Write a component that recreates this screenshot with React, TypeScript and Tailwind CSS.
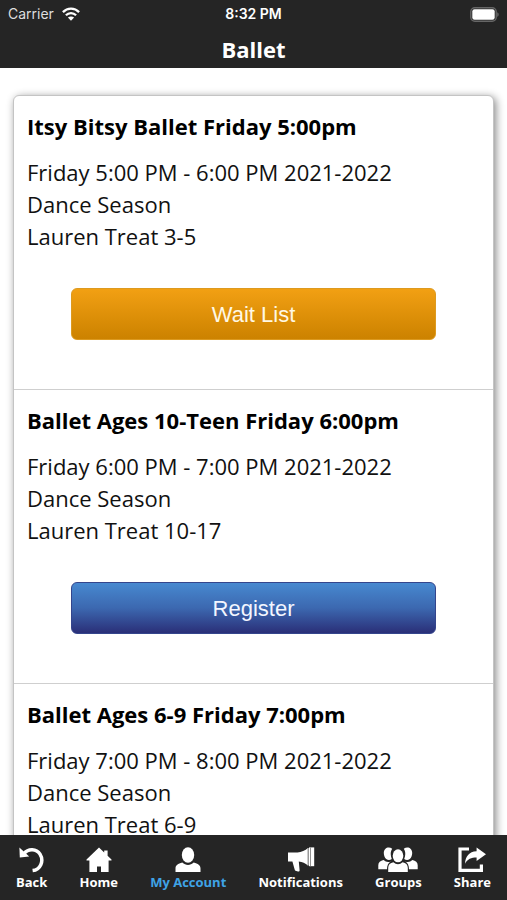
import type { ReactNode } from "react";

type Lesson = {
  title: string;
  time: string;
  season: string;
  teacher: string;
  action?: "Wait List" | "Register";
};

const lessons: Lesson[] = [
  {
    title: "Itsy Bitsy Ballet Friday 5:00pm",
    time: "Friday 5:00 PM - 6:00 PM 2021-2022",
    season: "Dance Season",
    teacher: "Lauren Treat 3-5",
    action: "Wait List",
  },
  {
    title: "Ballet Ages 10-Teen Friday 6:00pm",
    time: "Friday 6:00 PM - 7:00 PM 2021-2022",
    season: "Dance Season",
    teacher: "Lauren Treat 10-17",
    action: "Register",
  },
  {
    title: "Ballet Ages 6-9 Friday 7:00pm",
    time: "Friday 7:00 PM - 8:00 PM 2021-2022",
    season: "Dance Season",
    teacher: "Lauren Treat 6-9",
  },
];

const buttonStyle = {
  "Wait List":
    "border-[#dd9a20] bg-linear-to-b from-[#f2a013] to-[#cc8200] text-[#fff8e4]",
  Register:
    "border-[#34458c] bg-linear-to-b from-[#4789d0] via-[#3c68b0] to-[#2a2f78] text-[#f3f6ff]",
};

function StatusBar() {
  return (
    <div className="grid grid-cols-3 items-center px-2 pt-1 font-['Inter',sans-serif] text-sm leading-5">
      <div className="flex items-center gap-2 text-[#dedede]">
        <span>Carrier</span>
        <svg width="18" height="14" viewBox="0 0 18 14" aria-hidden="true">
          <g fill="none" stroke="#fff" strokeWidth="2.3">
            <path d="M0.9 5.1C5.4 0.5 12.6 0.5 17.1 5.1" />
            <path d="M3.9 8.3C6.8 5.4 11.2 5.4 14.1 8.3" />
          </g>
          <path d="M9 13.8L5.9 10.6C7.6 9 10.4 9 12.1 10.6Z" fill="#fff" />
        </svg>
      </div>
      <span className="text-center font-semibold">8:32 PM</span>
      <svg
        className="justify-self-end"
        width="29"
        height="15"
        viewBox="0 0 29 15"
        aria-hidden="true"
      >
        <rect x="0.8" y="0.8" width="25.4" height="13.4" rx="4" fill="none" stroke="#666" strokeWidth="1.4" />
        <rect x="2.3" y="2.3" width="22.4" height="10.4" rx="2.2" fill="#fff" />
        <path d="M27.2 5.2C29.2 6 29.2 9 27.2 9.8Z" fill="#666" />
      </svg>
    </div>
  );
}

function LessonRow({ lesson }: { lesson: Lesson }) {
  return (
    <li className="border-b border-[#cfcfcf] px-[13px] pt-[14px] pb-[49px] last:border-b-0">
      <h2 className="mb-[14px] text-[22px] leading-8 font-bold">{lesson.title}</h2>
      <div className="text-[22px] leading-8 text-[#111]">
        <p>{lesson.time}</p>
        <p>{lesson.season}</p>
        <p>{lesson.teacher}</p>
      </div>
      {lesson.action && (
        <div className="px-11 pt-9">
          <button
            type="button"
            className={`block h-[52px] w-full rounded-md border font-['Liberation_Sans',sans-serif] text-[22px] ${buttonStyle[lesson.action]}`}
          >
            {lesson.action}
          </button>
        </div>
      )}
    </li>
  );
}

function Icon({ width, children }: { width: number; children: ReactNode }) {
  return (
    <svg width={width} height="26" viewBox={`0 0 ${width} 26`} fill="#fff" aria-hidden="true">
      {children}
    </svg>
  );
}

const tabs: { label: string; active?: boolean; icon: ReactNode }[] = [
  {
    label: "Back",
    icon: (
      <Icon width={26}>
        <path d="M5 6.6C9.2 1.2 17.4 1.4 21 7.2C25.3 14.2 21.3 22.6 13.6 23.6" fill="none" stroke="#fff" strokeWidth="3.5" />
        <path d="M0.4 0.6L10.2 9.6L0.8 10.6Z" />
      </Icon>
    ),
  },
  {
    label: "Home",
    icon: (
      <Icon width={26}>
        <path d="M13 0.5L0.5 12.4V13.6H3.4V25H11V19.6H15V25H22.6V13.6H25.5V12.4L21.6 8.7V3.6H18.2V5.5Z" />
      </Icon>
    ),
  },
  {
    label: "My Account",
    active: true,
    icon: (
      <Icon width={26}>
        <ellipse cx="13" cy="8" rx="6.2" ry="7.8" />
        <path d="M0.5 25V21.6C0.5 18.3 3 16.6 7.3 15.6C10.6 18.7 15.4 18.7 18.7 15.6C23 16.6 25.5 18.3 25.5 21.6V25Z" />
      </Icon>
    ),
  },
  {
    label: "Notifications",
    icon: (
      <Icon width={28}>
        <path d="M1 5.6H10.5C14.3 5 18.3 3.4 21 1V18.6C18.3 16.3 15.4 15.2 11.8 14.6L12.6 23.2C12.7 24.2 12 24.6 11 24.4L9.2 24C8.2 23.8 7.9 23.2 7.6 22.2L5.4 14.4H1Z" />
        <path d="M20.5 1H22V18.6H20.5Z" fill="#999" />
        <path d="M22 0.4H27.2V19.2H22Z" />
        <path d="M23.2 0.4H24V19.2H23.2Z" fill="#777" />
      </Icon>
    ),
  },
  {
    label: "Groups",
    icon: (
      <Icon width={40}>
        <path d="M14.2 1.8C10.5 -0.9 5.8 1.2 5.8 6C5.8 8.6 6.8 10.8 8.2 12C10.1 13.5 12.2 13.2 13.8 12C12.4 8.6 12.2 4.9 14.2 1.8Z" />
        <path d="M25.8 1.8C29.5 -0.9 34.2 1.2 34.2 6C34.2 8.6 33.2 10.8 31.8 12C29.9 13.5 27.8 13.2 26.2 12C27.6 8.6 27.8 4.9 25.8 1.8Z" />
        <path d="M0.3 22.2V18.2C0.3 15.2 2.4 13.8 5.6 13.1C7.8 15.1 10.3 15.4 12.8 14.4C10.2 16 9 18.5 9 22.2Z" />
        <path d="M39.7 22.2V18.2C39.7 15.2 37.6 13.8 34.4 13.1C32.2 15.1 29.7 15.4 27.2 14.4C29.8 16 31 18.5 31 22.2Z" />
        <ellipse cx="20" cy="8.8" rx="5.3" ry="6.5" />
        <path d="M10.2 25V20.8C10.2 17.6 12.2 16 15.4 15.3C18.2 17.8 21.8 17.8 24.6 15.3C27.8 16 29.8 17.6 29.8 20.8V25Z" />
      </Icon>
    ),
  },
  {
    label: "Share",
    icon: (
      <Icon width={28}>
        <path d="M11 2H2V23.4H23.4V17.5" fill="none" stroke="#fff" strokeWidth="3.2" />
        <path d="M18.6 0.6L28 7.2L18.6 14V10.6C13.2 10.6 9.6 12 7 16.8C7.4 9.4 11 4.5 18.6 4.2Z" />
      </Icon>
    ),
  },
];

export default function App() {
  return (
    <div className="flex h-screen flex-col bg-white font-['Open_Sans',sans-serif] text-black">
      <header className="h-[68px] shrink-0 bg-[#252525] text-white">
        <StatusBar />
        <h1 className="mt-[11px] text-center text-[22px] leading-7 font-bold">Ballet</h1>
      </header>
      <main className="min-h-0 flex-1 overflow-y-auto px-[13px] pt-[27px] [scrollbar-width:none]">
        <ul className="rounded-md border border-[#c4c4c4] bg-white shadow-[2px_2px_8px_#888]">
          {lessons.map((lesson) => (
            <LessonRow key={lesson.title} lesson={lesson} />
          ))}
        </ul>
      </main>
      <nav className="flex h-[65px] shrink-0 items-start justify-between bg-[#252525] px-4 pt-3 text-[13px] leading-4 font-bold text-white">
        {tabs.map((tab) => (
          <a
            key={tab.label}
            href="#"
            aria-current={tab.active ? "page" : undefined}
            className={`flex flex-col items-center gap-px ${tab.active ? "text-[#3fa3e6]" : ""}`}
          >
            {tab.icon}
            {tab.label}
          </a>
        ))}
      </nav>
    </div>
  );
}
